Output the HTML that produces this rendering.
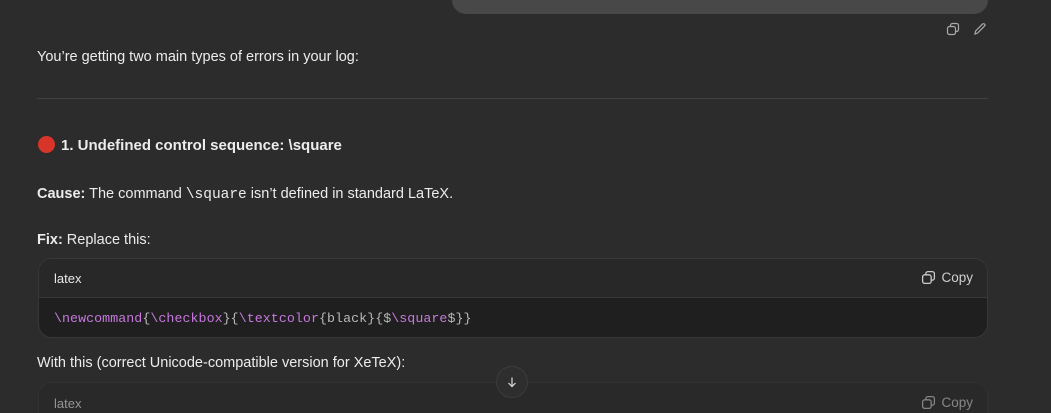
<!DOCTYPE html>
<html style="overflow:hidden;width:1051px;height:413px"><head><style>
body{margin:0;width:1051px;height:413px;overflow:hidden;background:#2c2c2c;font-family:"Liberation Sans",sans-serif;color:#ececec;position:relative}
.a{position:absolute}
.t{font-size:14.5px;left:37px}
.code{left:38px;width:948px;border:1px solid #383838;border-radius:14px;background:#1f1f1f;overflow:hidden}
.hd{height:38px;background:#282828;border-bottom:1px solid #383838;position:relative;font-size:13px}
.hd .l{position:absolute;left:15px;top:12px;color:#e8e8e8}
.hd .c{position:absolute;right:14px;top:11px;color:#cfcfcf;font-size:13.5px}
.mono{font-family:"Liberation Mono",monospace}
.p{color:#c678dd}.g{color:#b8b8b8}
</style></head><body>
<div class="a" style="left:452px;top:-30px;width:536px;height:44px;background:#484848;border-radius:14px"></div>
<svg class="a" style="left:946px;top:22px" width="14" height="14" viewBox="0 0 14 14" fill="none" stroke="#aaa" stroke-width="1.2"><rect x="1.5" y="4.5" width="8" height="8" rx="2"/><path d="M4.5 4.5V3.5a2 2 0 0 1 2-2h4a2 2 0 0 1 2 2v4a2 2 0 0 1-2 2h-1"/></svg>
<svg class="a" style="left:973px;top:22px" width="14" height="14" viewBox="0 0 14 14" fill="none" stroke="#aaa" stroke-width="1.2"><path d="M2 12l.6-3L9.5 2.1a1.4 1.4 0 0 1 2 2L4.6 11z"/></svg>
<div class="a t" style="top:49px">You’re getting two main types of errors in your log:</div>
<div class="a" style="left:37px;top:98px;width:951px;height:1px;background:#414141"></div>
<div class="a" style="left:38px;top:136px;width:17px;height:17px;border-radius:50%;background:#d8352a"></div>
<div class="a" style="left:61px;top:137px;font-size:15px;font-weight:bold">1. Undefined control sequence: \square</div>
<div class="a t" style="top:186px"><b>Cause:</b> The command <span class="mono">\square</span> isn’t defined in standard LaTeX.</div>
<div class="a t" style="top:232px"><b>Fix:</b> Replace this:</div>
<div class="a code" style="top:258px;height:78px">
<div class="hd"><span class="l">latex</span><span class="c">
<svg width="15" height="15" viewBox="0 0 14 14" fill="none" stroke="#ccc" stroke-width="1.2" style="vertical-align:-3px;margin-right:5px"><rect x="1.5" y="4.5" width="8" height="8" rx="2"/><path d="M4.5 4.5V3.5a2 2 0 0 1 2-2h4a2 2 0 0 1 2 2v4a2 2 0 0 1-2 2h-1"/></svg>Copy</span></div>
<div class="mono" style="position:absolute;left:15px;top:52px;font-size:13.3px;letter-spacing:0.05px"><span class="p">\newcommand</span><span class="g">{</span><span class="p">\checkbox</span><span class="g">}{</span><span class="p">\textcolor</span><span class="g">{black}{$</span><span class="p">\square</span><span class="g">$}}</span></div>
</div>
<div class="a t" style="top:355px">With this (correct Unicode-compatible version for XeTeX):</div>
<div class="a code" style="top:382px;height:31px;border-bottom:none;border-radius:14px 14px 0 0;opacity:.55">
<div class="hd"><span class="l" style="top:13px">latex</span><span class="c" style="top:12px">
<svg width="15" height="15" viewBox="0 0 14 14" fill="none" stroke="#ccc" stroke-width="1.2" style="vertical-align:-3px;margin-right:5px"><rect x="1.5" y="4.5" width="8" height="8" rx="2"/><path d="M4.5 4.5V3.5a2 2 0 0 1 2-2h4a2 2 0 0 1 2 2v4a2 2 0 0 1-2 2h-1"/></svg>Copy</span></div>
</div>
<div class="a" style="left:496px;top:366px;width:32px;height:32px;border-radius:50%;background:#2e2e2e;border:1px solid #3c3c3c;box-sizing:border-box"></div>
<svg class="a" style="left:506px;top:376px" width="12" height="12" viewBox="0 0 12 12" fill="none" stroke="#ddd" stroke-width="1.2"><path d="M6 1.5v9M2.5 7L6 10.5 9.5 7"/></svg>
</body></html>
